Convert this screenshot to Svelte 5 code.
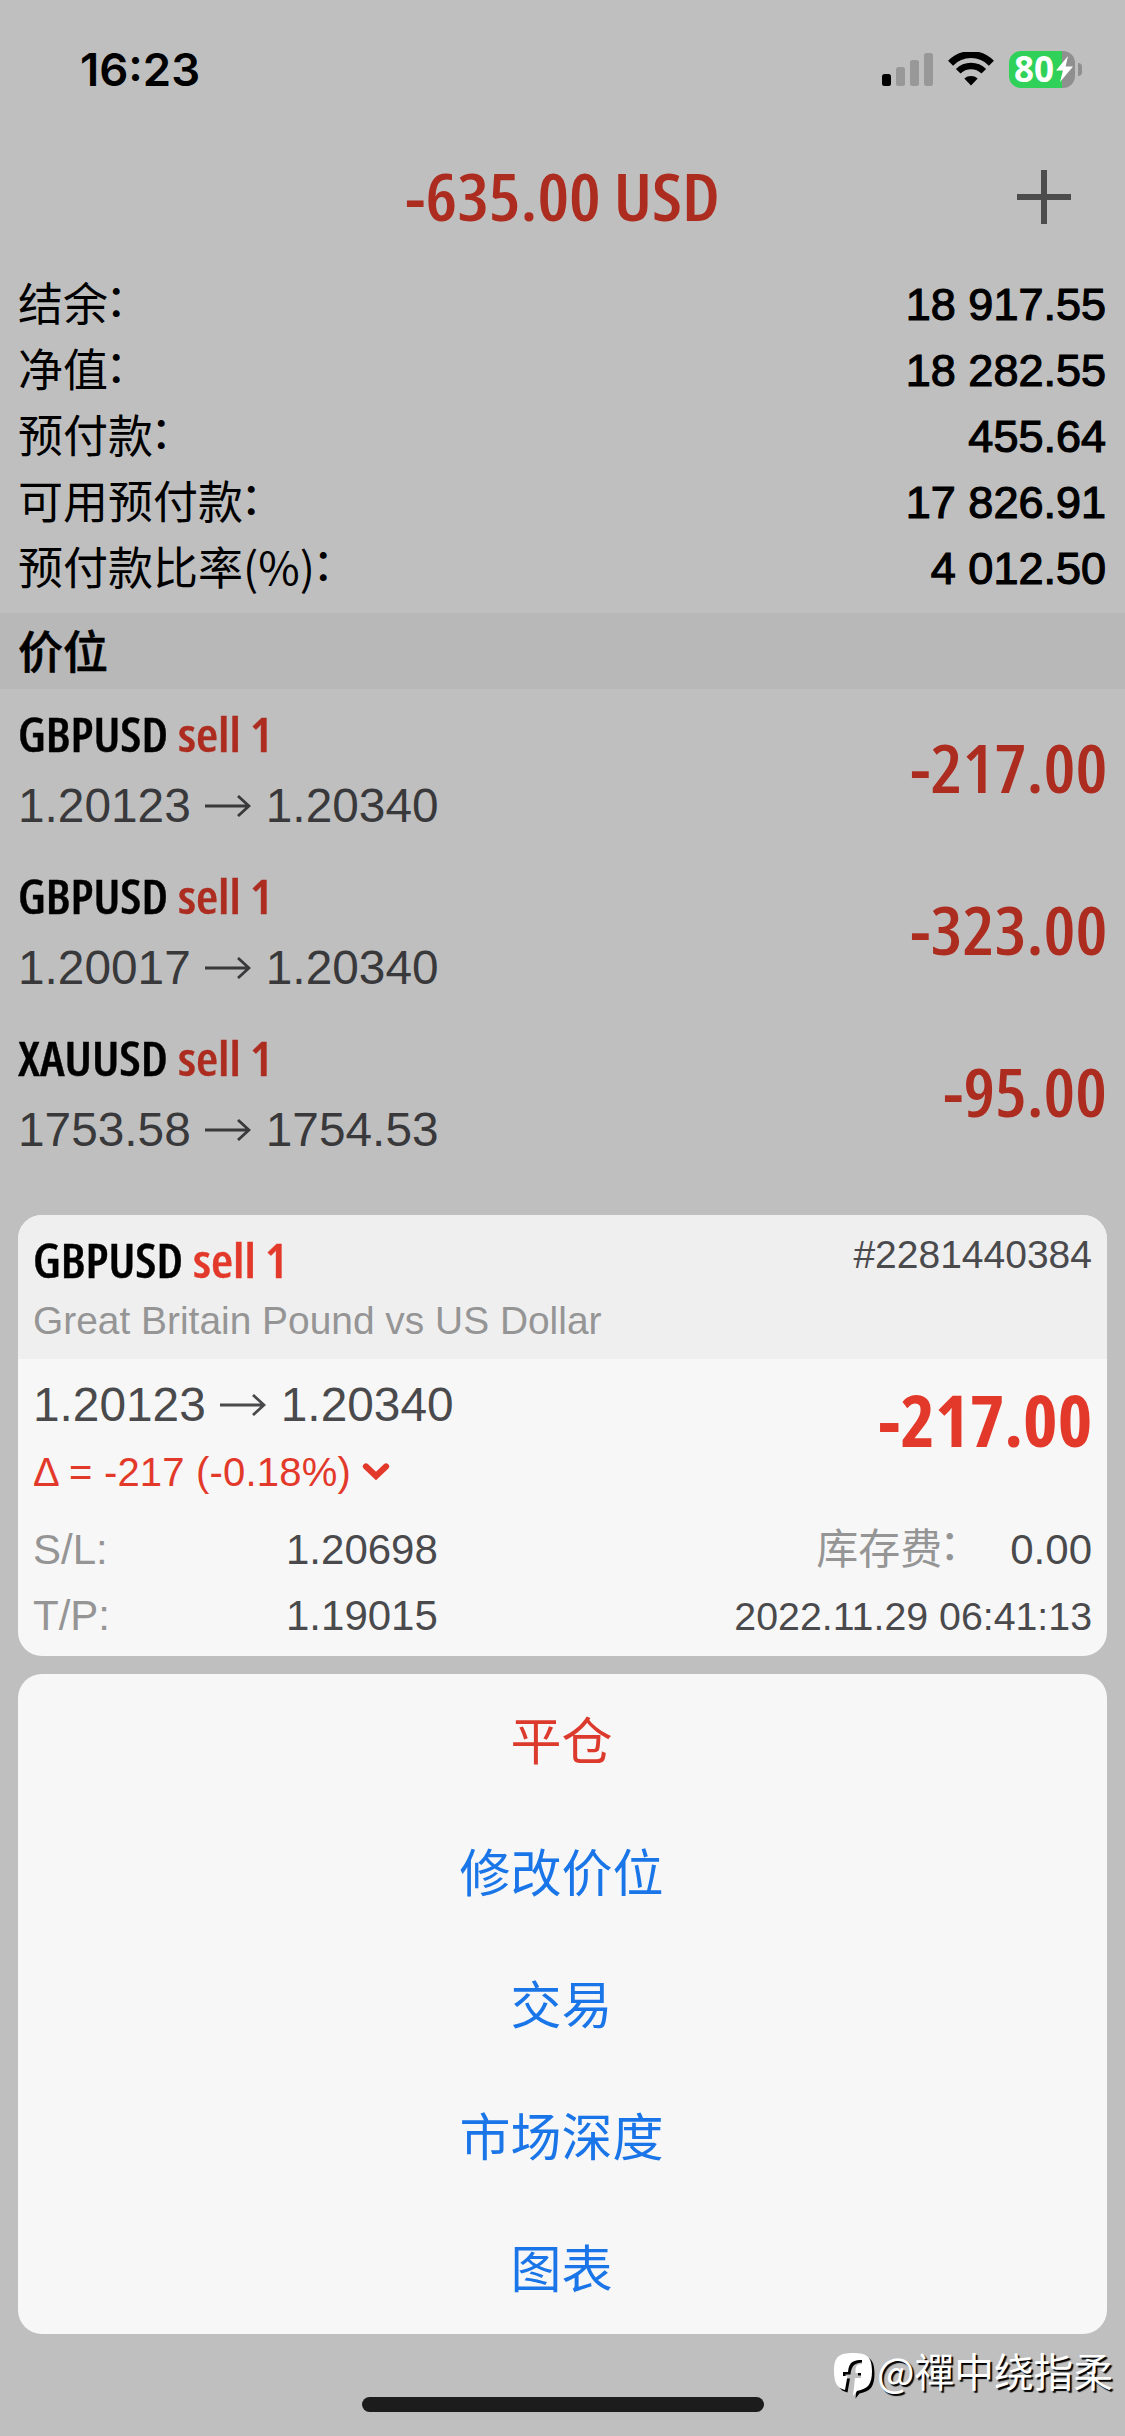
<script lang="ts">
	interface Position {
		id: number;
		symbol: string;
		side: string;
		open: string;
		current: string;
		profit: string;
		profitWidth: number;
	}

	const account = [
		{ label: '结余', value: '18 917.55' },
		{ label: '净值', value: '18 282.55' },
		{ label: '预付款', value: '455.64' },
		{ label: '可用预付款', value: '17 826.91' },
		{ label: '预付款比率(%)', value: '4 012.50' }
	];

	const positions: Position[] = [
		{ id: 1, symbol: 'GBPUSD', side: 'sell 1', open: '1.20123', current: '1.20340', profit: '-217.00', profitWidth: 197 },
		{ id: 2, symbol: 'GBPUSD', side: 'sell 1', open: '1.20017', current: '1.20340', profit: '-323.00', profitWidth: 197 },
		{ id: 3, symbol: 'XAUUSD', side: 'sell 1', open: '1753.58', current: '1754.53', profit: '-95.00', profitWidth: 164 }
	];

	const actions = [
		{ label: '平仓', danger: true },
		{ label: '修改价位' },
		{ label: '交易' },
		{ label: '市场深度' },
		{ label: '图表' }
	];

	// squeeze a line of text to the given width
	function condense(node: HTMLElement, width: number) {
		node.style.transform = `scaleX(${width / node.offsetWidth})`;
	}
</script>

{#snippet arrow()}
	<svg class="arrow" viewBox="0 0 47 22" width="47" height="22">
		<path d="M1 11H45M34 1L45 11L34 21" fill="none" stroke="currentColor" stroke-width="2.8" />
	</svg>
{/snippet}

{#snippet pair(symbol: string, side: string)}
	<div class="pair">
		<span class="symbol"><b use:condense={150}>{symbol}</b></span>
		<span class="side"><b use:condense={95}>{side}</b></span>
	</div>
{/snippet}

<div class="screen">
	<header class="status">
		<span class="time">16:23</span>
		<div class="indicators">
			<svg width="52" height="33" viewBox="0 0 52 33">
				<rect x="0" y="21" width="9" height="12" rx="2.5" fill="#000" />
				<rect x="14" y="14" width="9" height="19" rx="2.5" fill="#989898" />
				<rect x="28" y="7" width="9" height="26" rx="2.5" fill="#989898" />
				<rect x="42" y="0" width="9" height="33" rx="2.5" fill="#989898" />
			</svg>
			<svg class="wifi" width="46" height="34" viewBox="0 0 46 34">
				<path d="M2.6 11.2A28.5 28.5 0 0 1 43.4 11.2" fill="none" stroke="#000" stroke-width="7" />
				<path d="M10.2 19.3A18 18 0 0 1 35.8 19.3" fill="none" stroke="#000" stroke-width="6.6" />
				<path d="M16.3 26.4A10.5 10.5 0 0 1 29.7 26.4L23 33.5Z" fill="#000" />
			</svg>
			<div class="battery">
				<div class="cell">
					<span>80</span>
					<svg width="17" height="26" viewBox="0 0 17 26">
						<path d="M12 0L0 14.5H7L4 26L17 10.5H9.6Z" fill="#fff" />
					</svg>
				</div>
				<div class="nub"></div>
			</div>
		</div>
	</header>

	<div class="title">
		<h1><b use:condense={315}>-635.00 USD</b></h1>
		<button class="add" aria-label="add">
			<svg width="54" height="54" viewBox="0 0 54 54">
				<path d="M0 27H54M27 0V54" stroke="#4c4c4c" stroke-width="6" />
			</svg>
		</button>
	</div>

	<dl class="account">
		{#each account as row (row.label)}
			<div class="account-row">
				<dt>{row.label}<span class="colon">：</span></dt>
				<dd>{row.value}</dd>
			</div>
		{/each}
	</dl>

	<h2 class="section">价位</h2>

	<div class="positions">
		{#each positions as p (p.id)}
			<div class="position">
				<div class="info">
					{@render pair(p.symbol, p.side)}
					<div class="prices">{p.open}{@render arrow()}{p.current}</div>
				</div>
				<span class="profit"><b use:condense={p.profitWidth}>{p.profit}</b></span>
			</div>
		{/each}
	</div>

	<section class="card">
		<div class="card-head">
			<div class="head-row">
				{@render pair('GBPUSD', 'sell 1')}
				<span class="ticket">#2281440384</span>
			</div>
			<div class="description">Great Britain Pound vs US Dollar</div>
		</div>
		<div class="card-body">
			<div class="quote">
				<div>
					<div class="prices">1.20123{@render arrow()}1.20340</div>
					<div class="delta">
						Δ = -217 (-0.18%)
						<svg width="28" height="20" viewBox="0 0 28 20">
							<path d="M4 4.5L14 14L24 4.5" fill="none" stroke="currentColor" stroke-width="6.2" stroke-linecap="round" />
						</svg>
					</div>
				</div>
				<span class="profit large"><b use:condense={214}>-217.00</b></span>
			</div>
			<div class="detail">
				<span class="key">S/L:</span>
				<span class="value">1.20698</span>
				<span class="key swap">库存费<span class="colon">：</span></span>
				<span class="value">0.00</span>
			</div>
			<div class="detail">
				<span class="key">T/P:</span>
				<span class="value">1.19015</span>
				<span class="date">2022.11.29 06:41:13</span>
			</div>
		</div>
	</section>

	<section class="menu">
		{#each actions as action (action.label)}
			<button class:danger={action.danger}>{action.label}</button>
		{/each}
	</section>

	<footer>
		<div class="home"></div>
		<div class="watermark">
			<svg width="43" height="50" viewBox="0 0 43 50">
				<path
					d="M19 0C33 0 38 4 38 18C38 31 34 36 23 38L19 43L21 25H27V20H21.5C21.5 14 22 11 28 11V7C19 7 15 9 14 19H9V23H13.5L11 37C3 35 0 30 0 18C0 4 5 0 19 0Z"
					fill="#000"
					transform="translate(2.5 2.5)"
				/>
				<path
					d="M19 0C33 0 38 4 38 18C38 31 34 36 23 38L19 43L21 25H27V20H21.5C21.5 14 22 11 28 11V7C19 7 15 9 14 19H9V23H13.5L11 37C3 35 0 30 0 18C0 4 5 0 19 0Z"
					fill="#fff"
				/>
			</svg>
			<span>@禪中绕指柔</span>
		</div>
	</footer>
</div>

<style>
	:global(body) {
		margin: 0;
		background: #bfbfbf;
	}

	.screen {
		width: 1125px;
		height: 2436px;
		display: flex;
		flex-direction: column;
		overflow: hidden;
		background: #bfbfbf;
		color: #000;
		font-family: 'Liberation Sans', 'Noto Sans CJK SC', sans-serif;
	}

	button {
		padding: 0;
		border: none;
		background: none;
		font-family: inherit;
	}

	b {
		display: inline-block;
		white-space: nowrap;
		transform-origin: left;
		font-weight: inherit;
		font-stretch: 75%;
	}

	.colon {
		margin-left: -3px;
		line-height: 1;
		vertical-align: 4px;
	}

	.status {
		height: 138px;
		flex: none;
		display: flex;
		justify-content: space-between;
		align-items: center;
		box-sizing: border-box;
		padding: 0 43px 0 80px;
	}

	.time {
		font-family: Inter, sans-serif;
		font-weight: 600;
		font-size: 45.5px;
	}

	.indicators {
		display: flex;
		align-items: center;
	}

	.wifi {
		margin: 0 15px 0 14px;
	}

	.battery {
		display: flex;
		align-items: center;
		gap: 3px;
	}

	.cell {
		width: 66px;
		height: 37px;
		display: flex;
		align-items: center;
		box-sizing: border-box;
		padding-left: 5px;
		border-radius: 12px;
		background: linear-gradient(to right, #30d158 53px, #8f8f8f 53px);
	}

	.cell span {
		width: 42px;
		color: #fff;
		font: 700 35px/36px 'Open Sans', sans-serif;
	}

	.nub {
		width: 4px;
		height: 13px;
		border-radius: 0 4px 4px 0;
		background: #8f8f8f;
	}

	.title {
		height: 130px;
		flex: none;
		display: grid;
		grid-template-columns: 1fr 314px 1fr;
		align-items: center;
		padding: 0 54px 12px 0;
		box-sizing: border-box;
	}

	h1 {
		grid-column: 2;
		margin: -3px 0 0 26px;
		color: #ad2c20;
		font: 600 65px/80px 'Open Sans', sans-serif;
	}

	.add {
		display: flex;
		justify-self: end;
	}

	.account {
		margin: 0;
		padding: 4px 19px 0 18px;
		height: 341px;
		flex: none;
	}

	.account-row {
		height: 66px;
		display: flex;
		justify-content: space-between;
		align-items: center;
		font-size: 45px;
		line-height: 66px;
	}

	dt {
		margin-top: -6px;
		font-family: 'Noto Sans CJK SC', sans-serif;
	}

	dd {
		margin: 0;
		-webkit-text-stroke: 1.2px #000;
	}

	.section {
		margin: 0;
		height: 76px;
		flex: none;
		padding-left: 18px;
		background: #b8b8b8;
		font: 500 45px/73px 'Noto Sans CJK SC', sans-serif;
		-webkit-text-stroke: 0.6px #000;
	}

	.positions {
		height: 526px;
		flex: none;
		padding: 0 18px;
	}

	.position {
		height: 162px;
		display: flex;
		justify-content: space-between;
		align-items: center;
	}

	.position .info {
		padding-top: 5px;
	}

	.position .prices {
		margin-top: 6px;
	}

	.position .profit {
		margin-top: -6px;
	}

	.pair {
		display: flex;
		font: 600 47px/60px 'Open Sans', sans-serif;
		-webkit-text-stroke: 0.4px currentColor;
	}

	.symbol {
		width: 160px;
	}

	.side {
		width: 93px;
		color: #ad2c20;
	}

	.prices {
		display: flex;
		align-items: center;
		color: #39393b;
		font-size: 47.8px;
		line-height: 72px;
	}

	.arrow {
		margin: 0 15px 0 13px;
	}

	.profit {
		display: flex;
		color: #ad2c20;
		font: 600 66px/80px 'Open Sans', sans-serif;
	}

	.profit b {
		transform-origin: right;
	}

	.card {
		height: 441px;
		flex: none;
		margin: 0 18px 18px;
		border-radius: 24px;
		background: #f7f7f7;
		overflow: hidden;
	}

	.card-head {
		height: 144px;
		box-sizing: border-box;
		padding: 15px 15px 0;
		background: #efefef;
	}

	.head-row {
		display: flex;
		justify-content: space-between;
	}

	.ticket {
		margin-top: 1px;
		color: #4a4a4d;
		font-size: 39px;
		line-height: 48px;
	}

	.description {
		margin-top: 1px;
		color: #959595;
		font-size: 38.9px;
		line-height: 60px;
	}

	.card-body {
		padding: 10px 15px 0;
	}

	.card .side,
	.card .profit,
	.delta {
		color: #e3392b;
	}

	.card .prices,
	.value,
	.date {
		color: #4a4a4d;
	}

	.quote {
		height: 148px;
		display: flex;
		justify-content: space-between;
	}

	.delta {
		display: flex;
		align-items: center;
		gap: 11px;
		font-size: 40px;
		line-height: 62px;
		letter-spacing: 0.2px;
	}

	.profit.large {
		margin-top: 11px;
		font-weight: 700;
		font-size: 71px;
	}

	.detail {
		display: flex;
		align-items: center;
		height: 66px;
		font-size: 42px;
		line-height: 66px;
	}

	.key {
		width: 253px;
		color: #959595;
	}

	.key.swap {
		width: 172px;
		margin: 0 22px 0 auto;
	}

	.date {
		margin-left: auto;
		font-size: 39.3px;
	}

	.menu {
		height: 660px;
		flex: none;
		display: flex;
		flex-direction: column;
		margin: 0 18px;
		border-radius: 24px;
		background: #f7f7f7;
	}

	.menu button {
		height: 132px;
		padding: 6px 2px 0 0;
		color: #1a76e8;
		font-size: 51px;
		line-height: 126px;
	}

	.menu button.danger {
		color: #dc3a2d;
	}

	footer {
		position: relative;
		flex: 1;
		display: flex;
		justify-content: center;
		align-items: flex-end;
	}

	.home {
		width: 402px;
		height: 15px;
		margin-bottom: 24px;
		border-radius: 8px;
		background: #1c1c1c;
	}

	.watermark {
		position: absolute;
		right: 12px;
		top: 6px;
		display: flex;
		align-items: center;
		color: #fff;
		font: 400 39.7px/52px 'Noto Sans CJK SC', sans-serif;
		text-shadow: 2px 2px 1px #000;
	}

	.watermark span {
		margin-top: -4px;
	}

	.watermark svg {
		margin-top: 13px;
	}
</style>
